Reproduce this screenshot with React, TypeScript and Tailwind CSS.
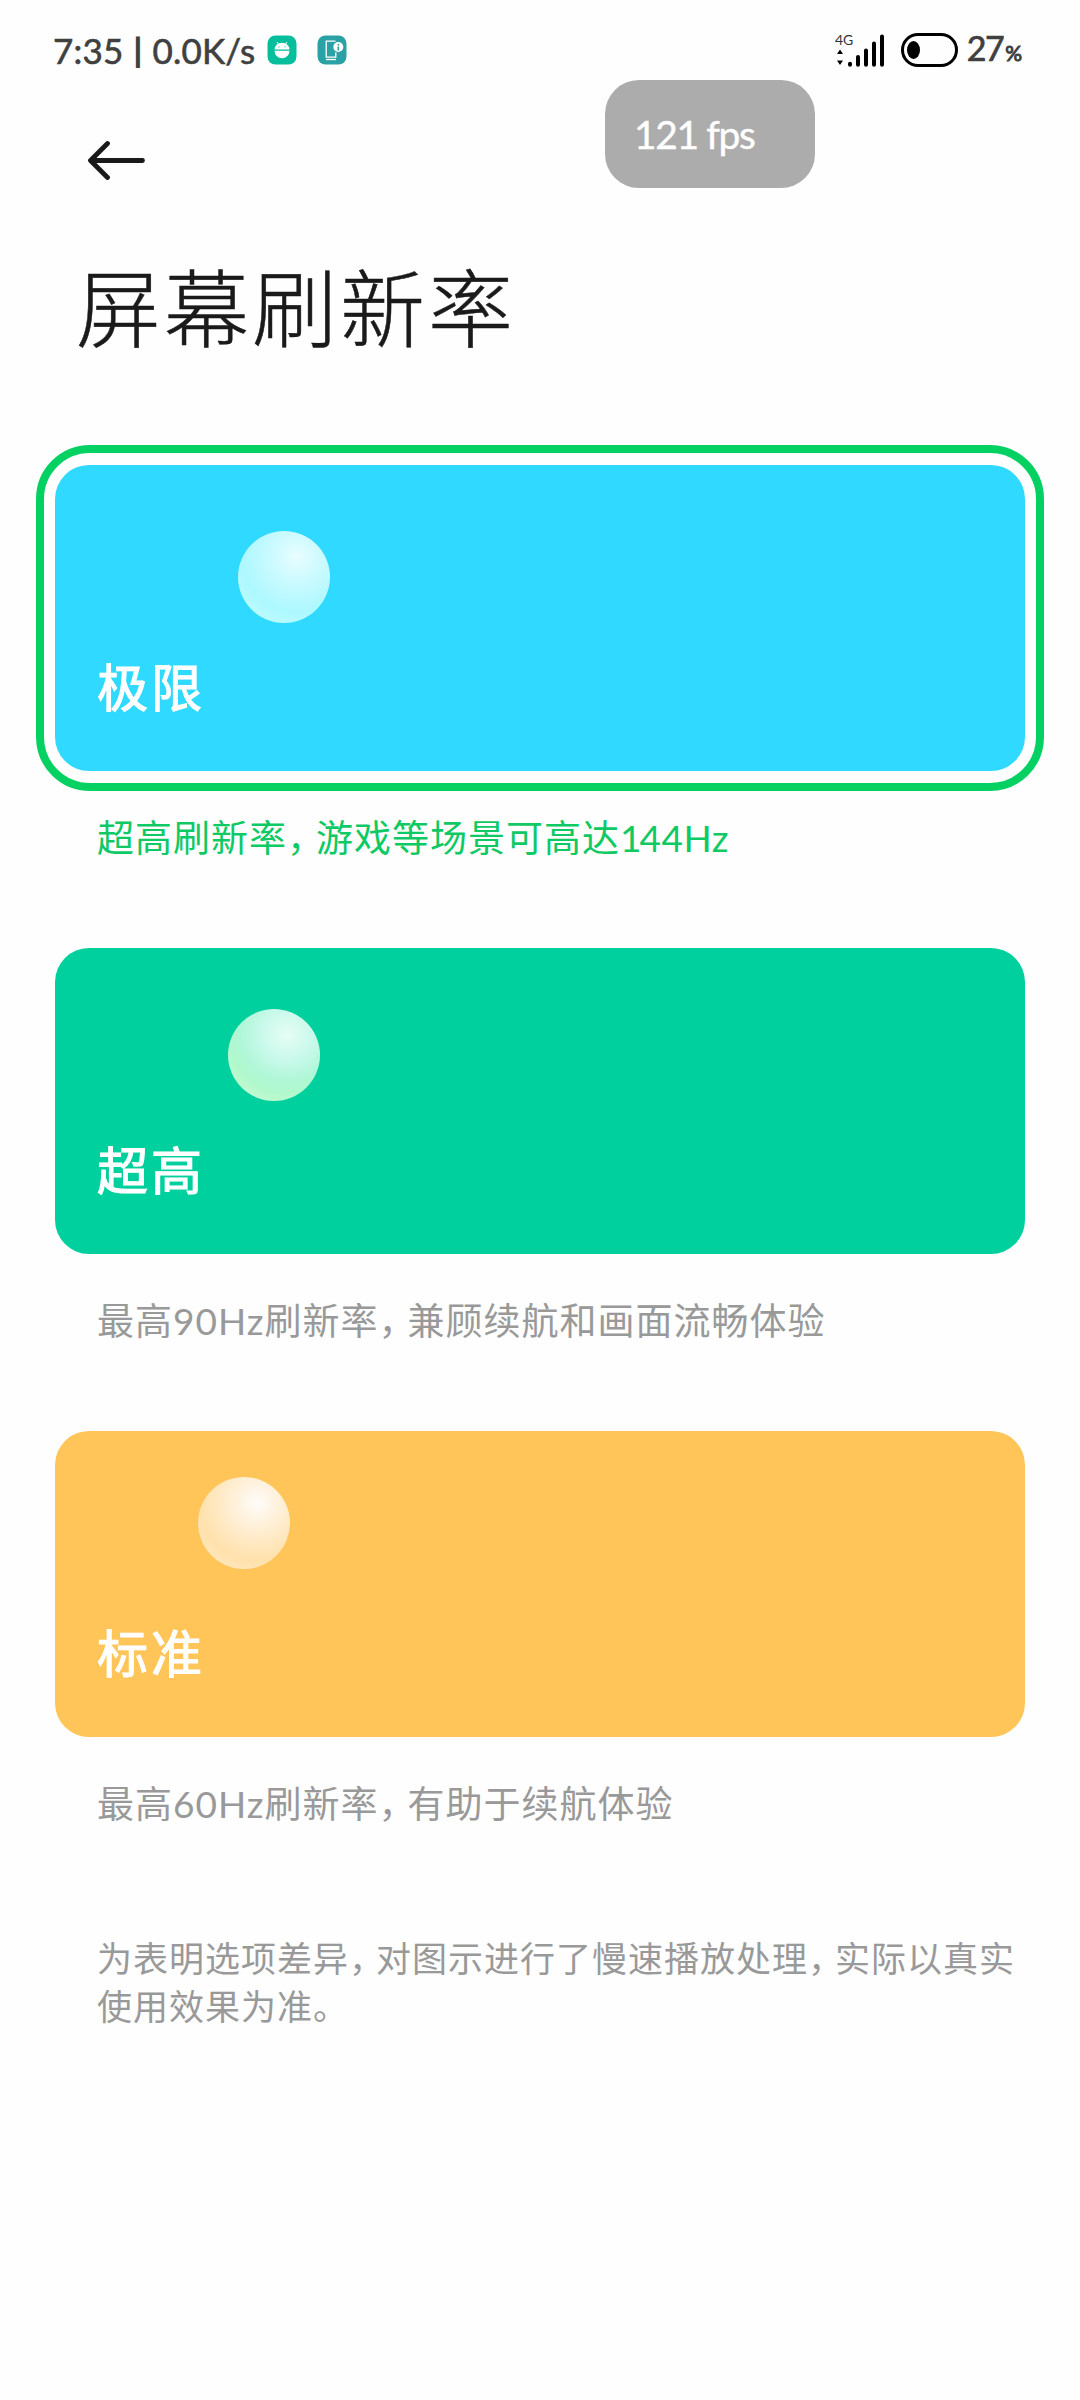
import React, { useState } from 'react';
import clsx from 'clsx';

interface RefreshMode {
  id: string;
  title: string;
  description: string;
  cardClass: string;
  ballClass: string;
}

const MODES: RefreshMode[] = [
  {
    id: 'extreme',
    title: '极限',
    description: '超高刷新率，游戏等场景可高达144Hz',
    cardClass: 'bg-[#2fd9ff]',
    ballClass:
      'ml-[183px] mt-[66px] bg-[radial-gradient(circle_at_64%_28%,#e9fdff_0%,#c8faff_32%,#adf8ff_62%,#bffcff_85%)]',
  },
  {
    id: 'high',
    title: '超高',
    description: '最高90Hz刷新率，兼顾续航和画面流畅体验',
    cardClass: 'bg-[#00d09e]',
    ballClass:
      'ml-[173px] mt-[61px] bg-[radial-gradient(circle_at_64%_28%,#e6fdf5_0%,#c8f9ea_30%,#b0f7d8_52%,#b0f8cc_66%,#c8fbd2_85%)]',
  },
  {
    id: 'standard',
    title: '标准',
    description: '最高60Hz刷新率，有助于续航体验',
    cardClass: 'bg-[#ffc558]',
    ballClass:
      'ml-[143px] mt-[46px] bg-[radial-gradient(circle_at_64%_28%,#fefcfa_0%,#ffeed2_32%,#ffe1ac_65%,#ffe8c2_88%)]',
  },
];

// Commas and the digit 1 are set tighter than the rest of the line
function Text({ children }: { children: string }) {
  return (
    <>
      {children.split(/(，|1|[0-9A-Za-z]+)/).map((part, i) => {
        if (part === '，') return <span key={i} className="tracking-[-8px]">{part}</span>;
        if (part === '1') return <span key={i} className="tracking-[-2px]">{part}</span>;
        if (/^4/.test(part)) return <span key={i} className="tracking-[0.5px]">{part}</span>;
        return <React.Fragment key={i}>{part}</React.Fragment>;
      })}
    </>
  );
}

function StatusBar() {
  return (
    <header className="flex h-[100px] items-center justify-between pl-[53px] pr-[58px] text-[#404040]">
      <div className="flex items-center">
        <span className="flex w-[214px] items-center whitespace-nowrap text-[35px] leading-[40px] tracking-[0.2px] [-webkit-text-stroke:0.6px_#404040]">
          7:35
          <span className="w-[29px] text-center text-[31px] [-webkit-text-stroke:1.8px_#404040]">|</span>
          0.0K/s
        </span>
        <svg width="30" height="30" viewBox="0 0 30 30">
          <rect x="0.5" y="0.5" width="29" height="29" rx="8" fill="#06bd9c" />
          <path d="M7.5 14.4a7.5 6.6 0 0 1 15 0z" fill="#fff" />
          <path d="M7.5 15.8h15a7.5 7.4 0 0 1-15 0z" fill="#fff" />
          <path d="M10 7l1.8 2.8M20 7l-1.8 2.8" stroke="#fff" strokeWidth="1" />
          <circle cx="12" cy="11.8" r="0.6" fill="#06bd9c" />
          <circle cx="18" cy="11.8" r="0.6" fill="#06bd9c" />
        </svg>
        <svg className="ml-5" width="30" height="30" viewBox="0 0 30 30">
          <rect x="0.5" y="0.5" width="29" height="29" rx="8" fill="#2aa1a5" />
          <path d="M18.5 6.2H9.2v16h9.6v-5" fill="none" stroke="#fff" strokeWidth="1.3" />
          <path d="M9 24.5h10" stroke="#fff" strokeWidth="1.3" />
          <circle cx="21.3" cy="12" r="5" fill="#fff" />
          <path d="M21.3 9v1.4M21.3 11.4v4" stroke="#2aa1a5" strokeWidth="1.6" />
        </svg>
      </div>
      <div className="flex items-center">
        <svg width="50" height="36" viewBox="0 0 50 36">
          <text x="0" y="12.5" fontSize="14" fill="#333">4G</text>
          <path d="M5 17.5l3 4.5H2z M5 33l3-4.5H2z" fill="#000" />
          <path
            d="M15 31.8v1M23 25v7.8M31 18.5v14.3M39 11.5v21.3M47 4.5v28.3"
            stroke="#000"
            strokeWidth="4"
            strokeLinecap="round"
          />
        </svg>
        <div className="ml-[16px] flex h-[34px] w-[57px] items-center rounded-full border-[3px] border-black pl-[3px]">
          <div className="h-[18px] w-[13px] rounded-[50%] bg-black" />
        </div>
        <div className="ml-[9px] flex items-baseline leading-[40px] [-webkit-text-stroke:0.7px_#404040]">
          <span className="text-[34px] tracking-[-1.5px]">27</span>
          <span className="ml-[2px] text-[21px] [-webkit-text-stroke:1px_#404040]">%</span>
        </div>
      </div>
    </header>
  );
}

function ModeOption({ mode, selected, onSelect }: { mode: RefreshMode; selected: boolean; onSelect: () => void }) {
  return (
    <section className="h-[483px]">
      <button
        onClick={onSelect}
        className={clsx('relative block h-[306px] w-full rounded-[34px] text-left', mode.cardClass)}
      >
        {selected && (
          <span className="absolute -inset-x-[19px] -inset-y-[20px] rounded-[54px] border-8 border-[#04d162]" />
        )}
        <span className="flex h-full flex-col">
          <span className={clsx('h-[92px] w-[92px] rounded-full', mode.ballClass)} />
          <span className="mb-[49px] ml-[42px] mt-auto text-[51px] leading-[68px] tracking-[3px] text-white [-webkit-text-stroke:1.2px_white]">
            {mode.title}
          </span>
        </span>
      </button>
      <p
        className={clsx(
          'ml-[42px] mt-[43px] whitespace-nowrap text-[37px] leading-[48px] tracking-[1px]',
          selected ? 'text-[#0fc964]' : 'text-[#999]'
        )}
      >
        <Text>{mode.description}</Text>
      </p>
    </section>
  );
}

export default function App() {
  const [selected, setSelected] = useState('extreme');

  return (
    <div className="relative h-[2400px] w-[1080px] overflow-hidden bg-[#fefefe] font-[Lato,'Noto_Sans_CJK_SC',sans-serif]">
      <StatusBar />

      {/* Floating frame rate overlay */}
      <div className="absolute left-[605px] top-[80px] flex h-[108px] w-[210px] items-center rounded-[34px] bg-[#acacac] pl-[29px] text-[39px] tracking-[-1.4px] text-white [-webkit-text-stroke:0.4px_white]">
        121 fps
      </div>

      <div className="pl-[87px] pt-[40px]">
        <button className="block" aria-label="返回">
          <svg width="60" height="40" viewBox="0 0 60 40">
            <path
              d="M55.5 20.5H4M20.5 3.5L3.5 20.5L20.5 37.5"
              fill="none"
              stroke="#1a1a1a"
              strokeWidth="4.8"
              strokeLinecap="round"
              strokeLinejoin="round"
            />
          </svg>
        </button>
      </div>

      <h1 className="mt-[68px] h-[217px] pl-[76px] text-[85px] font-extralight leading-[120px] tracking-[3px] text-[#1a1a1a] [-webkit-text-stroke:0.5px_#1a1a1a]">
        屏幕刷新率
      </h1>

      <main className="pl-[55px] pr-[55px]">
        {MODES.map(mode => (
          <ModeOption
            key={mode.id}
            mode={mode}
            selected={mode.id === selected}
            onSelect={() => setSelected(mode.id)}
          />
        ))}
        <p className="ml-[42px] mt-[20px] whitespace-nowrap text-[35px] leading-[48px] tracking-[1px] text-[#999]">
          <Text>为表明选项差异，对图示进行了慢速播放处理，实际以真实</Text>
          <br />
          使用效果为准。
        </p>
      </main>
    </div>
  );
}
